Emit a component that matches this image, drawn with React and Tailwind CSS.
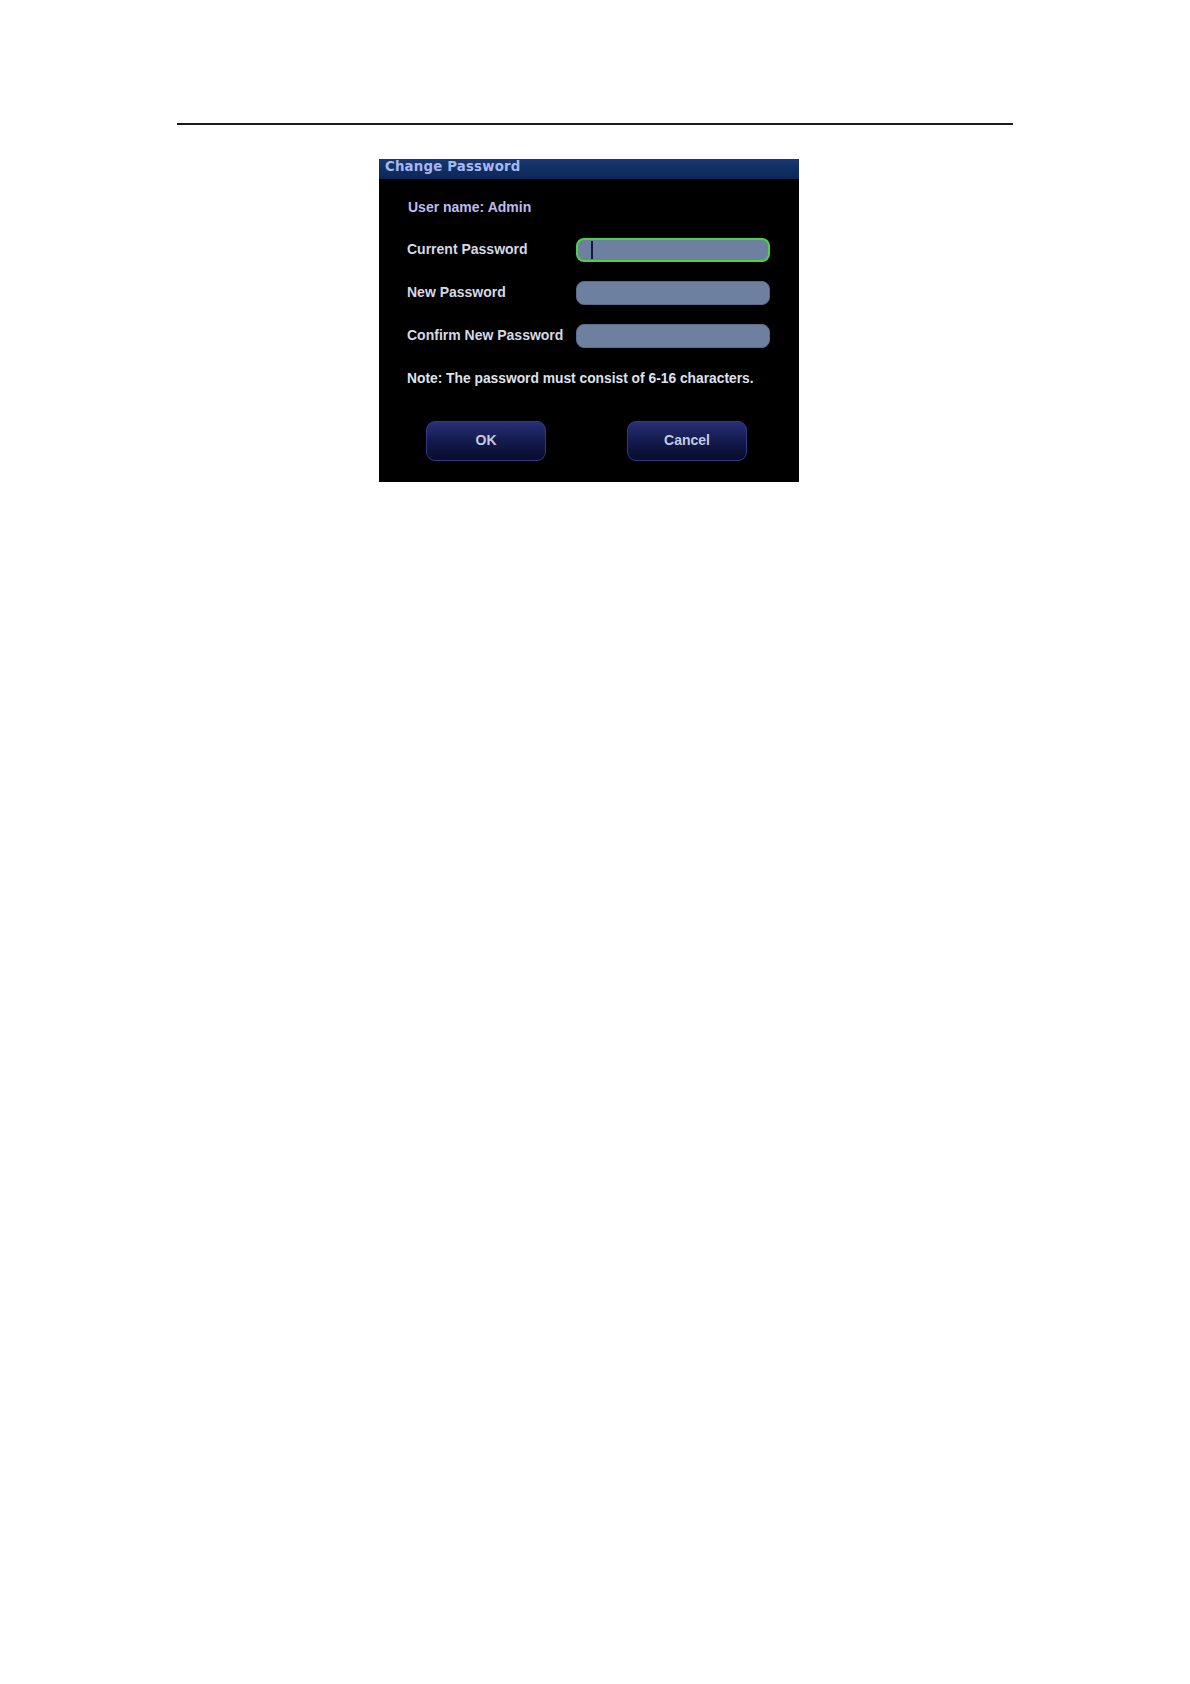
import React from 'react';

const Field = ({ label, focused }) => (
  <div className="flex items-center h-[24px]">
    <div className="w-[169px] text-[14px] font-bold text-[#d6d9e4]">{label}</div>
    <div
      className={`relative w-[194px] h-[24px] rounded-[8px] bg-[#6d80a0] ${
        focused ? 'border-2 border-[#4fd046]' : 'border border-[#5b6b88]'
      }`}
    >
      {focused && <div className="absolute left-[13px] top-[1px] w-[2px] h-[18px] bg-[#101a40]" />}
    </div>
  </div>
);

const Btn = ({ children }) => (
  <button className="w-[120px] h-[40px] rounded-[9px] border border-[#2e3a86] bg-gradient-to-b from-[#283077] via-[#141a4d] to-[#080c2c] text-[14px] font-bold text-[#c3cbe2]">
    {children}
  </button>
);

export default function App() {
  return (
    <div className="min-h-[1684px] bg-white pt-[123px]" style={{ fontFamily: '"Liberation Sans", Arial, sans-serif' }}>
      <div className="ml-[177px] w-[836px] h-[1.5px] bg-[#1a1a1a]" />

      <div className="mt-[34px] ml-[379px] w-[420px] bg-black">
        <div className="h-[20px] bg-gradient-to-b from-[#163872] to-[#0d2656] pl-[6px] flex items-start">
          <span
            className="text-[13.3px] leading-[15px] font-bold text-[#a8b6f2] tracking-[0.2px]"
            style={{ fontFamily: '"DejaVu Sans", Verdana, sans-serif' }}
          >
            Change Password
          </span>
        </div>

        <div className="pl-[28px] pb-[21px]">
          <div className="mt-[19px] h-[20px] flex items-center pl-[1px] text-[14px] font-bold text-[#bcbcf0]">
            User name: Admin
          </div>

          <div className="mt-[20px] flex flex-col gap-[19px]">
            <Field label="Current Password" focused />
            <Field label="New Password" />
            <Field label="Confirm New Password" />
          </div>

          <div className="mt-[22px] h-[20px] flex items-center text-[13.8px] font-bold text-[#dfe2ec]">
            Note: The password must consist of 6-16 characters.
          </div>

          <div className="mt-[31px] flex pl-[19px] gap-[81px]">
            <Btn>OK</Btn>
            <Btn>Cancel</Btn>
          </div>
        </div>
      </div>
    </div>
  );
}
